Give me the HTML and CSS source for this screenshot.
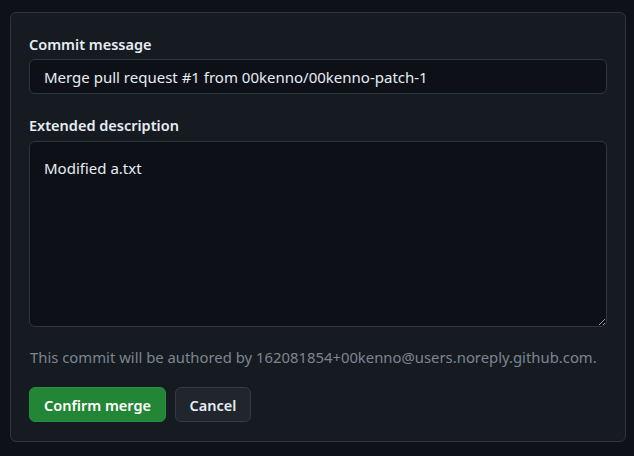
FILE: index.html
```html
<!DOCTYPE html>
<html lang="en">
<head>
<meta charset="utf-8">
<title>Confirm merge</title>
<link rel="stylesheet" href="styles.css">
</head>
<body>
<div class="card">
  <label class="label" for="msg">Commit message</label>
  <input class="input" id="msg" type="text" value="Merge pull request #1 from 00kenno/00kenno-patch-1">
  <label class="label label-gap" for="desc">Extended description</label>
  <textarea class="textarea" id="desc">Modified a.txt</textarea>
  <p class="note">This commit will be authored by 162081854+00kenno@users.noreply.github.com.</p>
  <div class="actions">
    <button class="btn btn-primary" type="button">Confirm merge</button>
    <button class="btn btn-default" type="button">Cancel</button>
  </div>
</div>
</body>
</html>
```
FILE: styles.css
```css
html, body {
  height: 100%;
}
body {
  margin: 0;
  padding: 12px 8px 0 10px;
  box-sizing: border-box;
  background: #0e1117;
  font-family: "Noto Sans", "Open Sans", sans-serif;
  font-size: 15px;
  color: #e6edf3;
}
.card {
  display: flex;
  flex-direction: column;
  width: 616px;
  height: 430px;
  box-sizing: border-box;
  background: #161b22;
  border: 1px solid #30363d;
  border-radius: 6px;
  padding: 21px 18px 18px 18px;
}
.label {
  display: block;
  font-size: 14.5px;
  font-weight: 600;
  line-height: 20px;
  margin-bottom: 5px;
  color: #e6edf3;
}
.label-gap {
  margin-top: 21px;
  margin-bottom: 6px;
}
.input, .textarea {
  box-sizing: border-box;
  width: 578px;
  background: #0d1117;
  border: 1px solid #30363d;
  border-radius: 6px;
  color: #e6edf3;
  font-family: inherit;
  font-size: 15px;
  outline: none;
  margin: 0;
}
.input {
  height: 35px;
  padding: 0 14px;
  line-height: 20px;
}
.textarea {
  height: 186px;
  padding: 15px 14px;
  line-height: 22px;
  resize: vertical;
  display: block;
}
.note {
  margin: 20px 0 0 1px;
  font-size: 14.85px;
  line-height: 21px;
  color: #7d8590;
}
.actions {
  display: flex;
  gap: 9px;
  margin-top: 19px;
}
.btn {
  height: 35px;
  box-sizing: border-box;
  border-radius: 6px;
  font-family: inherit;
  font-size: 14.5px;
  font-weight: 600;
  padding: 0;
  white-space: nowrap;
  cursor: pointer;
}
.btn-primary {
  background: #238636;
  border: 1px solid #2a8c3d;
  color: #ffffff;
  width: 137px;
}
.btn-default {
  background: #21262d;
  border: 1px solid #363b42;
  color: #e6edf3;
  width: 76px;
}
```
